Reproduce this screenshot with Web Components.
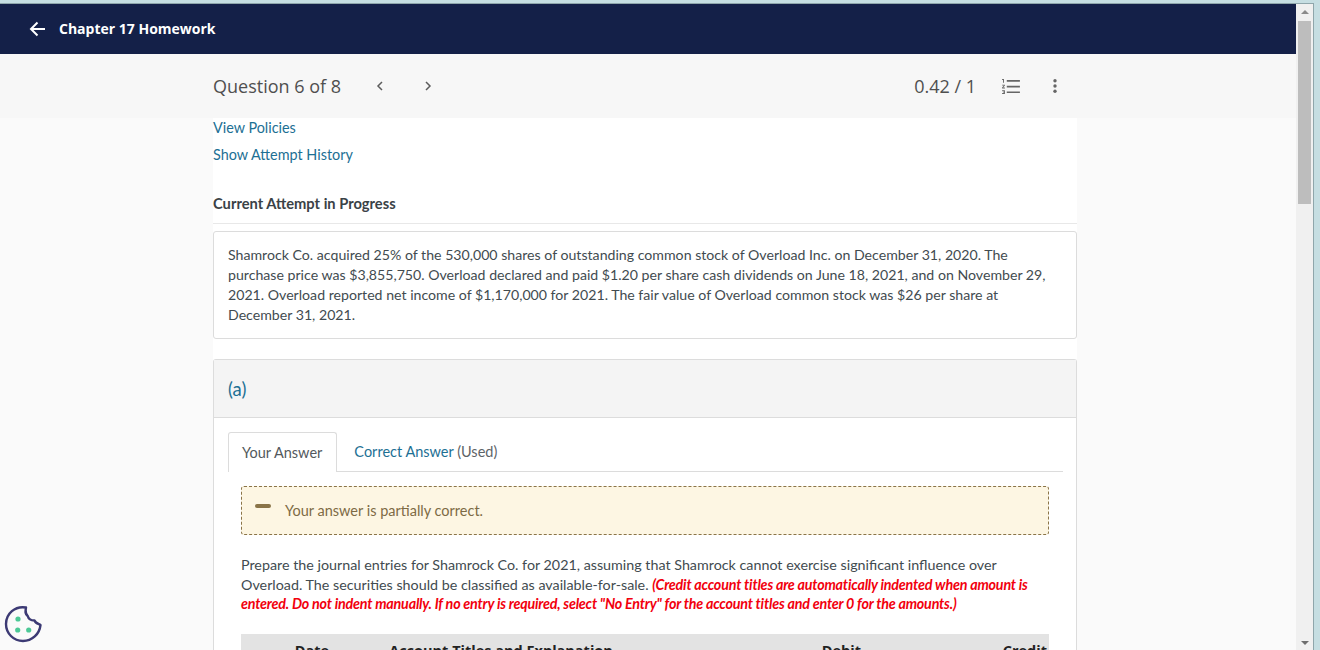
<!DOCTYPE html>
<html lang="en">
<head>
<meta charset="utf-8">
<title>Chapter 17 Homework</title>
<style>
  html, body { margin: 0; height: 650px; overflow: hidden; background: #c6dee2; }
  body { font-family: "Lato", "Liberation Sans", sans-serif; }
</style>
</head>
<body>
<app-window>
  <top-nav>Chapter 17 Homework</top-nav>
  <question-bar question="Question 6 of 8" score="0.42 / 1"></question-bar>
  <page-column>
    <link-row>View Policies</link-row>
    <link-row>Show Attempt History</link-row>
    <section-title>Current Attempt in Progress</section-title>
    <text-card>Shamrock Co. acquired 25% of the 530,000 shares of outstanding common stock of Overload Inc. on December 31, 2020. The purchase price was $3,855,750. Overload declared and paid $1.20 per share cash dividends on June 18, 2021, and on November 29, 2021. Overload reported net income of $1,170,000 for 2021. The fair value of Overload common stock was $26 per share at December 31, 2021.</text-card>
    <part-panel label="(a)">
      <answer-tabs></answer-tabs>
      <notice-box>Your answer is partially correct.</notice-box>
      <task-text>Prepare the journal entries for Shamrock Co. for 2021, assuming that Shamrock cannot exercise significant influence over Overload. The securities should be classified as available-for-sale. <em>(Credit account titles are automatically indented when amount is entered. Do not indent manually. If no entry is required, select "No Entry" for the account titles and enter 0 for the amounts.)</em></task-text>
      <entry-table></entry-table>
    </part-panel>
  </page-column>
  <cookie-badge></cookie-badge>
</app-window>

<script>
  // small helper so each element just declares its html
  const define = (name, html) => {
    customElements.define(name, class extends HTMLElement {
      constructor() {
        super();
        this.attachShadow({ mode: "open" });
        this.shadowRoot.innerHTML = typeof html === "function" ? html(this) : html;
      }
    });
  };

  define("app-window", `
    <style>
      :host { display: block; height: 650px; box-sizing: border-box; padding: 3px 6px 0 0; position: relative; overflow: hidden; }
      .frame { height: 647px; display: flex; border-top: 1px solid #8fa6ab; border-right: 1px solid #8fa6ab; background: #fafafa; box-sizing: border-box; }
      .main { flex: 1; min-width: 0; display: flex; flex-direction: column; overflow: hidden; }
      .track { width: 17px; background: #f0f0f0; display: flex; flex-direction: column; align-items: center; justify-content: space-between; position: relative; padding: 6px 0 5px; box-sizing: border-box; }
      .thumb { position: absolute; top: 17px; left: 2px; width: 13px; height: 183px; background: #bdbdbd; }
      .up { width: 0; height: 0; border: 4px solid transparent; border-top: 0; border-bottom: 4px solid #8a8a8a; }
      .down { width: 0; height: 0; border: 4px solid transparent; border-bottom: 0; border-top: 4px solid #6e6e6e; }
    </style>
    <div class="frame">
      <div class="main"><slot></slot></div>
      <div class="track"><span class="up"></span><span class="thumb"></span><span class="down"></span></div>
    </div>
  `);

  define("top-nav", `
    <style>
      :host { display: flex; flex: none; height: 50px; box-sizing: border-box; padding: 0 0 2px 29px; align-items: center; gap: 13px; background: #142048; color: #fff; font: 700 14px "Open Sans", sans-serif; }
      svg { display: block; position: relative; top: 1px; }
    </style>
    <svg width="17" height="16" viewBox="0 0 17 16" fill="none" stroke="#fff" stroke-width="2" aria-hidden="true"><path d="M16 8H2M8.500 1.500 2 8l6.500 6.500"/></svg>
    <span><slot></slot></span>
  `);

  define("question-bar", (el) => `
    <style>
      :host { display: block; flex: none; height: 64px; background: #f7f7f7; color: #4f4f4f; }
      .inner { width: 864px; margin-left: 213px; height: 100%; display: flex; align-items: center; font: 18px "Open Sans", sans-serif; }
      .nav { display: flex; gap: 38px; margin-left: 34px; }
      .score { margin-left: auto; margin-right: 26px; }
      svg { display: block; }
      .list { margin-right: 33px; }
      .more { margin-right: 20px; }
    </style>
    <div class="inner">
      <span>${el.getAttribute("question")}</span>
      <div class="nav">
        <svg width="10" height="10" viewBox="0 0 10 10" fill="none" stroke="#5c5c5c" stroke-width="1.500"><path d="M7 1 3 5l4 4"/></svg>
        <svg width="10" height="10" viewBox="0 0 10 10" fill="none" stroke="#5c5c5c" stroke-width="1.500"><path d="m3 1 4 4-4 4"/></svg>
      </div>
      <span class="score">${el.getAttribute("score")}</span>
      <svg class="list" width="18" height="15" viewBox="2 4 19 16" fill="#666"><path d="M2 17h2v.5H3v1h1v.5H2v1h3v-4H2zm1-9h1V4H2v1h1v3zm-1 3h1.800L2 13.100v.9h3v-1H3.200L5 10.900V10H2v1zm5-6v1.800h14V5H7zm0 14h14v-1.800H7V19zm0-6h14v-1.800H7V13z"/></svg>
      <svg class="more" width="4" height="14" viewBox="0 0 4 14" fill="#666"><circle cx="2" cy="1.700" r="1.700"/><circle cx="2" cy="7" r="1.700"/><circle cx="2" cy="12.300" r="1.700"/></svg>
    </div>
  `);

  define("page-column", `
    <style>
      :host { display: block; width: 864px; margin-left: 213px; background: #fff; flex: 1; min-height: 0; color: #424b50; }
    </style>
    <slot></slot>
  `);

  define("link-row", `
    <style>
      :host { display: block; height: 27px; line-height: 20px; font-size: 14.400px; color: #1d7094; }
    </style>
    <slot></slot>
  `);

  define("section-title", `
    <style>
      :host { display: block; margin-top: 21px; padding-bottom: 10px; line-height: 20px; font-size: 14.700px; font-weight: 700; color: #3a4246; border-bottom: 1px solid #e8e8e8; }
    </style>
    <slot></slot>
  `);

  define("text-card", `
    <style>
      :host { display: block; margin-top: 7px; height: 108px; box-sizing: border-box; padding: 13px 14px; font-size: 14.150px; line-height: 20px; border: 1px solid #dcdcdc; border-radius: 3px; }
    </style>
    <slot></slot>
  `);

  define("part-panel", (el) => `
    <style>
      :host { display: block; margin-top: 20px; border: 1px solid #dcdcdc; border-bottom: 0; border-radius: 3px 3px 0 0; }
      header { height: 58px; box-sizing: border-box; padding-left: 14px; display: flex; align-items: center; font-size: 18.500px; color: #1d7094; background: #f4f4f4; border-bottom: 1px solid #dcdcdc; }
      .body { padding: 14px 14px 0; }
    </style>
    <header>${el.getAttribute("label")}</header>
    <div class="body"><slot></slot></div>
  `);

  define("answer-tabs", `
    <style>
      :host { display: flex; height: 40px; margin-right: -1px; box-sizing: border-box; border-bottom: 1px solid #dcdcdc; font-size: 14.500px; line-height: 20px; }
      .tab { height: 40px; box-sizing: border-box; padding: 10px 14px 0 13px; background: #fff; border: 1px solid #dcdcdc; border-bottom: 0; border-radius: 3px 3px 0 0; color: #53595d; }
      .other { padding: 10px 0 0 17px; color: #5d6367; }
      .other span { color: #1d7094; }
    </style>
    <div class="tab">Your Answer</div>
    <div class="other"><span>Correct Answer</span> (Used)</div>
  `);

  define("notice-box", `
    <style>
      :host { display: flex; align-items: center; margin: 14px 13px 0; height: 49px; box-sizing: border-box; padding-left: 13px; background: #fdf6e3; border: 1px dashed #8a7448; border-radius: 3px; color: #7d6b45; font-size: 14.500px; }
      .dash { width: 16px; height: 4px; border-radius: 2px; background: #8a7448; margin-right: 14px; position: relative; top: -5px; }
    </style>
    <span class="dash"></span><span><slot></slot></span>
  `);

  define("task-text", `
    <style>
      :host { display: block; margin: 20px 13px 0; font-size: 14.300px; line-height: 19.500px; color: #424b50; }
      ::slotted(em) { font-style: italic; font-weight: 700; color: #f2000d; letter-spacing: -0.200px; }
    </style>
    <slot></slot>
  `);

  define("entry-table", `
    <style>
      :host { display: grid; grid-template-columns: 142px 236px 242px 188px; margin: 20px 13px 0; height: 40px; background: #e3e3e3; font: 700 14.500px "Open Sans", sans-serif; color: #222; padding-top: 7px; box-sizing: border-box; white-space: nowrap; }
      span { text-align: center; }
      .debit { text-align: right; }
      .credit { text-align: right; padding-right: 2px; }
    </style>
    <span class="date">Date</span>
    <span>Account Titles and Explanation</span>
    <span class="debit">Debit</span>
    <span class="credit">Credit</span>
  `);

  // floats over the page, bottom left
  define("cookie-badge", `
    <style>
      :host { position: absolute; left: 4px; top: 605px; width: 38px; height: 38px; display: block; }
      svg { display: block; }
    </style>
    <svg width="38" height="38" viewBox="0 0 38 38" fill="none" aria-hidden="true">
      <path d="M22 2.500C11 .5 2 8.900 2 19c0 9.300 7.500 17 17 17 9 0 16.500-6.800 17.500-16-1.500-1-5-1.500-6-4.500-3.500 0-6-1.500-6.800-4.500-2.500-2-2.500-4-1.700-8.500z" stroke="#3c3a74" stroke-width="2.400" stroke-linejoin="round"/>
      <g fill="#4cc996"><circle cx="14" cy="14" r="2.600"/><circle cx="13.700" cy="25" r="2.600"/><circle cx="24.700" cy="25" r="2.600"/></g>
    </svg>
  `);
</script>
</body>
</html>
